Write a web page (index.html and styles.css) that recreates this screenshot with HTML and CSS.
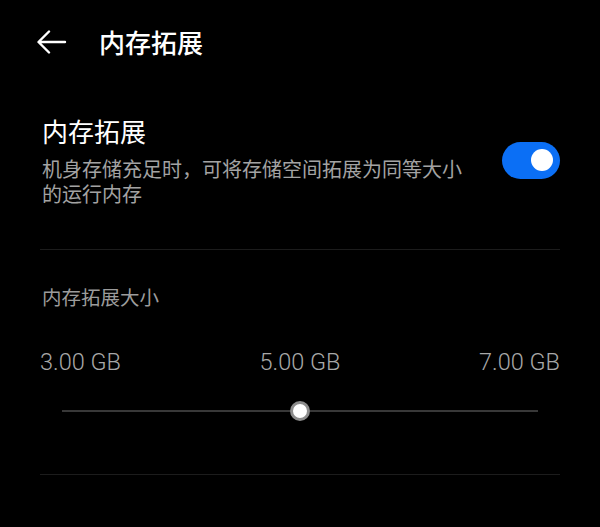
FILE: index.html
```html
<!DOCTYPE html>
<html lang="zh">
<head>
<meta charset="utf-8">
<title>内存拓展</title>
<link rel="stylesheet" href="styles.css">
</head>
<body>
<div class="page">
  <header class="header">
    <svg class="back" width="30" height="24" viewBox="0 0 30 24">
      <path d="M28 12H2.5M12 1.5L1.5 12L12 22.5" fill="none" stroke="#fff" stroke-width="2.4" stroke-linecap="round" stroke-linejoin="round"/>
    </svg>
    <h1 class="header-title">内存拓展</h1>
  </header>
  <section class="content">
    <div class="setting-row">
      <div class="setting-text">
        <div class="setting-title">内存拓展</div>
        <div class="setting-desc">机身存储充足时，可将存储空间拓展为同等大小的运行内存</div>
      </div>
      <div class="toggle"><div class="knob"></div></div>
    </div>
    <div class="divider first"></div>
    <div class="size-label">内存拓展大小</div>
    <div class="values">
      <span class="value">3.00 GB</span>
      <span class="value">5.00 GB</span>
      <span class="value">7.00 GB</span>
    </div>
    <div class="slider">
      <div class="track"></div>
      <div class="thumb"></div>
      <div class="track"></div>
    </div>
    <div class="divider last"></div>
  </section>
</div>
</body>
</html>
```
FILE: styles.css
```css
html, body {
  margin: 0;
  padding: 0;
  background: #000;
}
.page {
  width: 600px;
  height: 527px;
  background: #000;
  color: #fff;
  font-family: "Noto Sans CJK SC", "Noto Sans", sans-serif;
  overflow: hidden;
}
.header {
  height: 84px;
  display: flex;
  align-items: center;
}
.back {
  margin-left: 37px;
  display: block;
}
.header-title {
  margin: 0 0 0 32px;
  font-size: 26px;
  font-weight: 500;
  line-height: 34px;
  color: #fff;
}
.content {
  padding: 0 40px 0 42px;
}
.setting-row {
  margin-top: 30px;
  display: flex;
  align-items: center;
  gap: 30px;
}
.setting-text {
  flex: 1;
}
.setting-title {
  font-size: 26px;
  line-height: 34px;
  color: #fff;
}
.setting-desc {
  margin-top: 8px;
  font-size: 20px;
  line-height: 25px;
  color: #a3a3a3;
}
.toggle {
  width: 58px;
  height: 37px;
  border-radius: 19px;
  background: #0b6ff5;
  display: flex;
  align-items: center;
  justify-content: flex-end;
  box-sizing: border-box;
  padding-right: 7px;
  flex-shrink: 0;
}
.knob {
  width: 22px;
  height: 22px;
  border-radius: 50%;
  background: #fff;
}
.divider {
  height: 1px;
  background: #1c1c1c;
  margin-left: -2px;
}
.divider.first {
  margin-top: 43px;
}
.size-label {
  margin-top: 34px;
  font-size: 19.5px;
  line-height: 26px;
  color: #9c9c9c;
}
.values {
  margin-top: 38px;
  margin-left: -2px;
  display: flex;
  justify-content: space-between;
  font-family: Roboto, "Noto Sans", sans-serif;
  font-weight: 300;
  font-size: 23.5px;
  line-height: 28px;
  color: #a8a8a8;
}
.slider {
  margin-top: 25px;
  height: 20px;
  display: flex;
  align-items: center;
  padding: 0 22px 0 20px;
}
.track {
  flex: 1;
  height: 2px;
  background: #383838;
}
.thumb {
  width: 20px;
  height: 20px;
  box-sizing: border-box;
  border-radius: 50%;
  border: 3px solid #8c8c8c;
  background: #fff;
  flex-shrink: 0;
}
.divider.last {
  margin-top: 53px;
}
```
